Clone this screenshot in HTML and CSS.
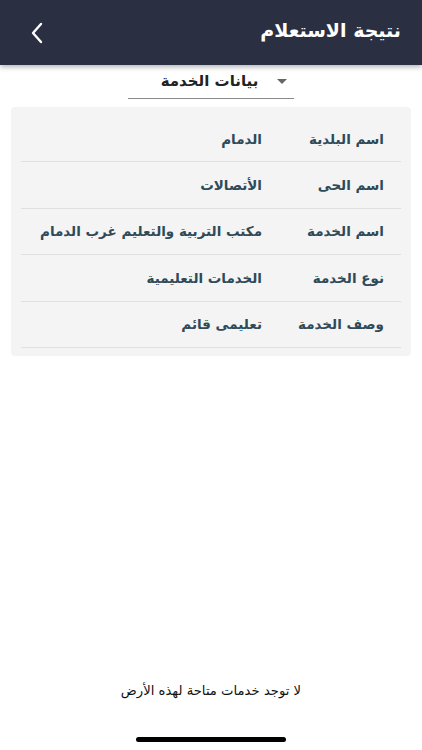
FILE: index.html
```html
<!doctype html>
<html lang="ar" dir="rtl">
<head>
  <meta charset="utf-8">
  <title>نتيجة الاستعلام</title>
  <link rel="stylesheet" href="styles.css">
</head>
<body>
  <header class="topbar">
    <h1 class="topbar-title">نتيجة الاستعلام</h1>
    <a href="#" class="back-btn">
      <svg width="14" height="22" viewBox="0 0 14 22"><path d="M11 2 L3 11 L11 20" fill="none" stroke="#fff" stroke-width="2.4" stroke-linecap="round" stroke-linejoin="round"/></svg>
    </a>
  </header>

  <div class="picker-wrap">
    <div class="picker">
      <span class="picker-caret"></span>
      <span class="picker-label">بيانات الخدمة</span>
    </div>
  </div>

  <div class="card">
    <div class="row">
      <div class="row-label">اسم البلدية</div>
      <div class="row-value">الدمام</div>
    </div>
    <div class="row">
      <div class="row-label">اسم الحى</div>
      <div class="row-value">الأتصالات</div>
    </div>
    <div class="row">
      <div class="row-label">اسم الخدمة</div>
      <div class="row-value">مكتب التربية والتعليم غرب الدمام</div>
    </div>
    <div class="row">
      <div class="row-label">نوع الخدمة</div>
      <div class="row-value">الخدمات التعليمية</div>
    </div>
    <div class="row">
      <div class="row-label">وصف الخدمة</div>
      <div class="row-value">تعليمى قائم</div>
    </div>
  </div>

  <div class="spacer"></div>

  <p class="empty-note">لا توجد خدمات متاحة لهذه الأرض</p>
  <div class="home-bar"></div>
</body>
</html>
```

FILE: styles.css
```css
:root {
  --navy: #2b2f42;
  --ink: #2f4a58;
  --panel: #f4f4f4;
  --line: #e0e0e0;
}
html, body {
  height: 100%;
}
body {
  font-family: "DejaVu Sans", "Noto Sans", sans-serif;
  margin: 0;
  background: #fff;
  display: flex;
  flex-direction: column;
  overflow: hidden;
}
.topbar {
  height: 65px;
  background: var(--navy);
  display: flex;
  align-items: center;
  justify-content: space-between;
  padding: 0 21px 0 30px;
  box-shadow: 0 2px 5px rgba(0,0,0,0.3);
  flex-shrink: 0;
}
.topbar-title {
  margin: 0;
  color: #fff;
  font-size: 19px;
  font-weight: bold;
  padding-bottom: 5px;
}
.back-btn {
  display: flex;
  align-items: center;
}
.picker-wrap {
  display: flex;
  justify-content: center;
  padding-top: 3px;
}
.picker {
  width: 166px;
  height: 31px;
  border-bottom: 1px solid #8a8a8a;
  display: flex;
  align-items: center;
  padding: 0 7px 4px 0;
  box-sizing: border-box;
}
.picker-label {
  flex: 1;
  text-align: center;
  font-size: 15px;
  font-weight: bold;
  color: #222;
  padding-left: 14px;
}
.picker-caret {
  width: 0;
  height: 0;
  border-left: 5px solid transparent;
  border-right: 5px solid transparent;
  border-top: 5px solid #666;
}
.card {
  margin: 8px 11px 0;
  background: var(--panel);
  border-radius: 4px;
  padding: 9px 10px 8px;
}
.row {
  display: flex;
  align-items: center;
  height: 45.4px;
  border-bottom: 1px solid var(--line);
  color: var(--ink);
  font-size: 13.5px;
  font-weight: bold;
}
.row-label {
  width: 139px;
  padding-right: 17px;
  box-sizing: border-box;
  flex-shrink: 0;
}
.row-value {
  flex: 1;
}
.spacer {
  flex: 1;
}
.empty-note {
  margin: 0 0 39px;
  text-align: center;
  font-size: 13.2px;
  color: #111;
}
.home-bar {
  width: 150px;
  height: 5px;
  border-radius: 3px;
  background: #000;
  margin: 0 auto 8px;
}
```
